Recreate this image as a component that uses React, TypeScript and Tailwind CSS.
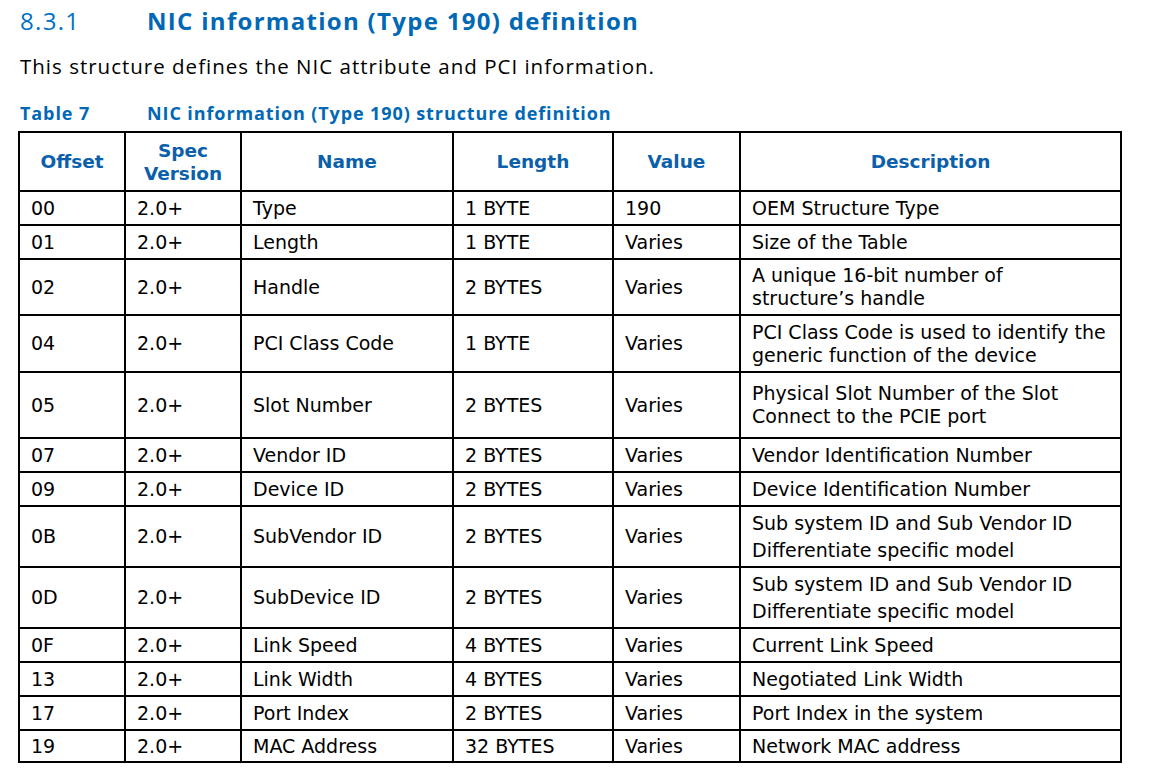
const rows: { off: string; name: string; len: string; val: string; desc: string[]; h: string }[] = [
  { off: '00', name: 'Type', len: '1 BYTE', val: '190', desc: ['OEM Structure Type'], h: 'h-[34px]' },
  { off: '01', name: 'Length', len: '1 BYTE', val: 'Varies', desc: ['Size of the Table'], h: 'h-[34px]' },
  { off: '02', name: 'Handle', len: '2 BYTES', val: 'Varies', desc: ['A unique 16-bit number of', 'structure\u2019s handle'], h: 'h-[56px]' },
  { off: '04', name: 'PCI Class Code', len: '1 BYTE', val: 'Varies', desc: ['PCI Class Code is used to identify the', 'generic function of the device'], h: 'h-[57px]' },
  { off: '05', name: 'Slot Number', len: '2 BYTES', val: 'Varies', desc: ['Physical Slot Number of the Slot', 'Connect to the PCIE port'], h: 'h-[66px]' },
  { off: '07', name: 'Vendor ID', len: '2 BYTES', val: 'Varies', desc: ['Vendor Identification Number'], h: 'h-[34px]' },
  { off: '09', name: 'Device ID', len: '2 BYTES', val: 'Varies', desc: ['Device Identification Number'], h: 'h-[34px]' },
  { off: '0B', name: 'SubVendor ID', len: '2 BYTES', val: 'Varies', desc: ['Sub system ID and Sub Vendor ID', 'Differentiate specific model'], h: 'h-[61px]' },
  { off: '0D', name: 'SubDevice ID', len: '2 BYTES', val: 'Varies', desc: ['Sub system ID and Sub Vendor ID', 'Differentiate specific model'], h: 'h-[61px]' },
  { off: '0F', name: 'Link Speed', len: '4 BYTES', val: 'Varies', desc: ['Current Link Speed'], h: 'h-[34px]' },
  { off: '13', name: 'Link Width', len: '4 BYTES', val: 'Varies', desc: ['Negotiated Link Width'], h: 'h-[34px]' },
  { off: '17', name: 'Port Index', len: '2 BYTES', val: 'Varies', desc: ['Port Index in the system'], h: 'h-[34px]' },
  { off: '19', name: 'MAC Address', len: '32 BYTES', val: 'Varies', desc: ['Network MAC address'], h: 'h-[32px]' },
]

export default function App() {
  const th = 'border-2 border-black text-center align-middle text-[18.5px] font-bold text-[#0b5fab]'
  const td = 'border-2 border-black pl-[11px] align-middle whitespace-nowrap'

  return (
    <div className="min-h-screen w-[1153px] bg-white text-black">
      <div className="flex h-[38px] items-end pb-[5px] pl-[20px] font-['Open_Sans',sans-serif] text-[24px] leading-none tracking-[1.3px] text-[#0071c5]">
        <span className="w-[127px]">8.3.1</span>
        <span className="font-bold text-[#0068b5]">NIC information (Type 190) definition</span>
      </div>
      <div className="flex h-[38px] items-end pl-[20px] font-['Open_Sans',sans-serif] text-[20.5px] leading-none tracking-[1px]">
        This structure defines the NIC attribute and PCI information.
      </div>
      <div className="flex h-[48px] items-end pb-[2px] pl-[20px] font-['Open_Sans',sans-serif] text-[18px] font-bold leading-none tracking-[0.9px] text-[#0068b5]">
        <span className="w-[127px]">Table 7</span>
        <span>NIC information (Type 190) structure definition</span>
      </div>

      <table className="ml-[18px] mt-[7px] table-fixed border-collapse font-['DejaVu_Sans',sans-serif] text-[19px] leading-[23px]">
        <colgroup>
          <col className="w-[106px]" />
          <col className="w-[116px]" />
          <col className="w-[212px]" />
          <col className="w-[160px]" />
          <col className="w-[127px]" />
          <col className="w-[381px]" />
        </colgroup>
        <thead>
          <tr className="h-[59px]">
            <th className={th}>Offset</th>
            <th className={th}>
              Spec
              <br />
              Version
            </th>
            <th className={th}>Name</th>
            <th className={th}>Length</th>
            <th className={th}>Value</th>
            <th className={th}>Description</th>
          </tr>
        </thead>
        <tbody>
          {rows.map(function (r) {
            return (
              <tr key={r.off} className={r.h}>
                <td className={td}>{r.off}</td>
                <td className={td}>2.0+</td>
                <td className={td}>{r.name}</td>
                <td className={td}>{r.len}</td>
                <td className={td}>{r.val}</td>
                <td className={td}>
                  {r.desc.map(function (line, i) {
                    return (
                      <div key={i} className={r.h === 'h-[61px]' ? 'leading-[27px]' : ''}>
                        {line}
                      </div>
                    )
                  })}
                </td>
              </tr>
            )
          })}
        </tbody>
      </table>
    </div>
  )
}
